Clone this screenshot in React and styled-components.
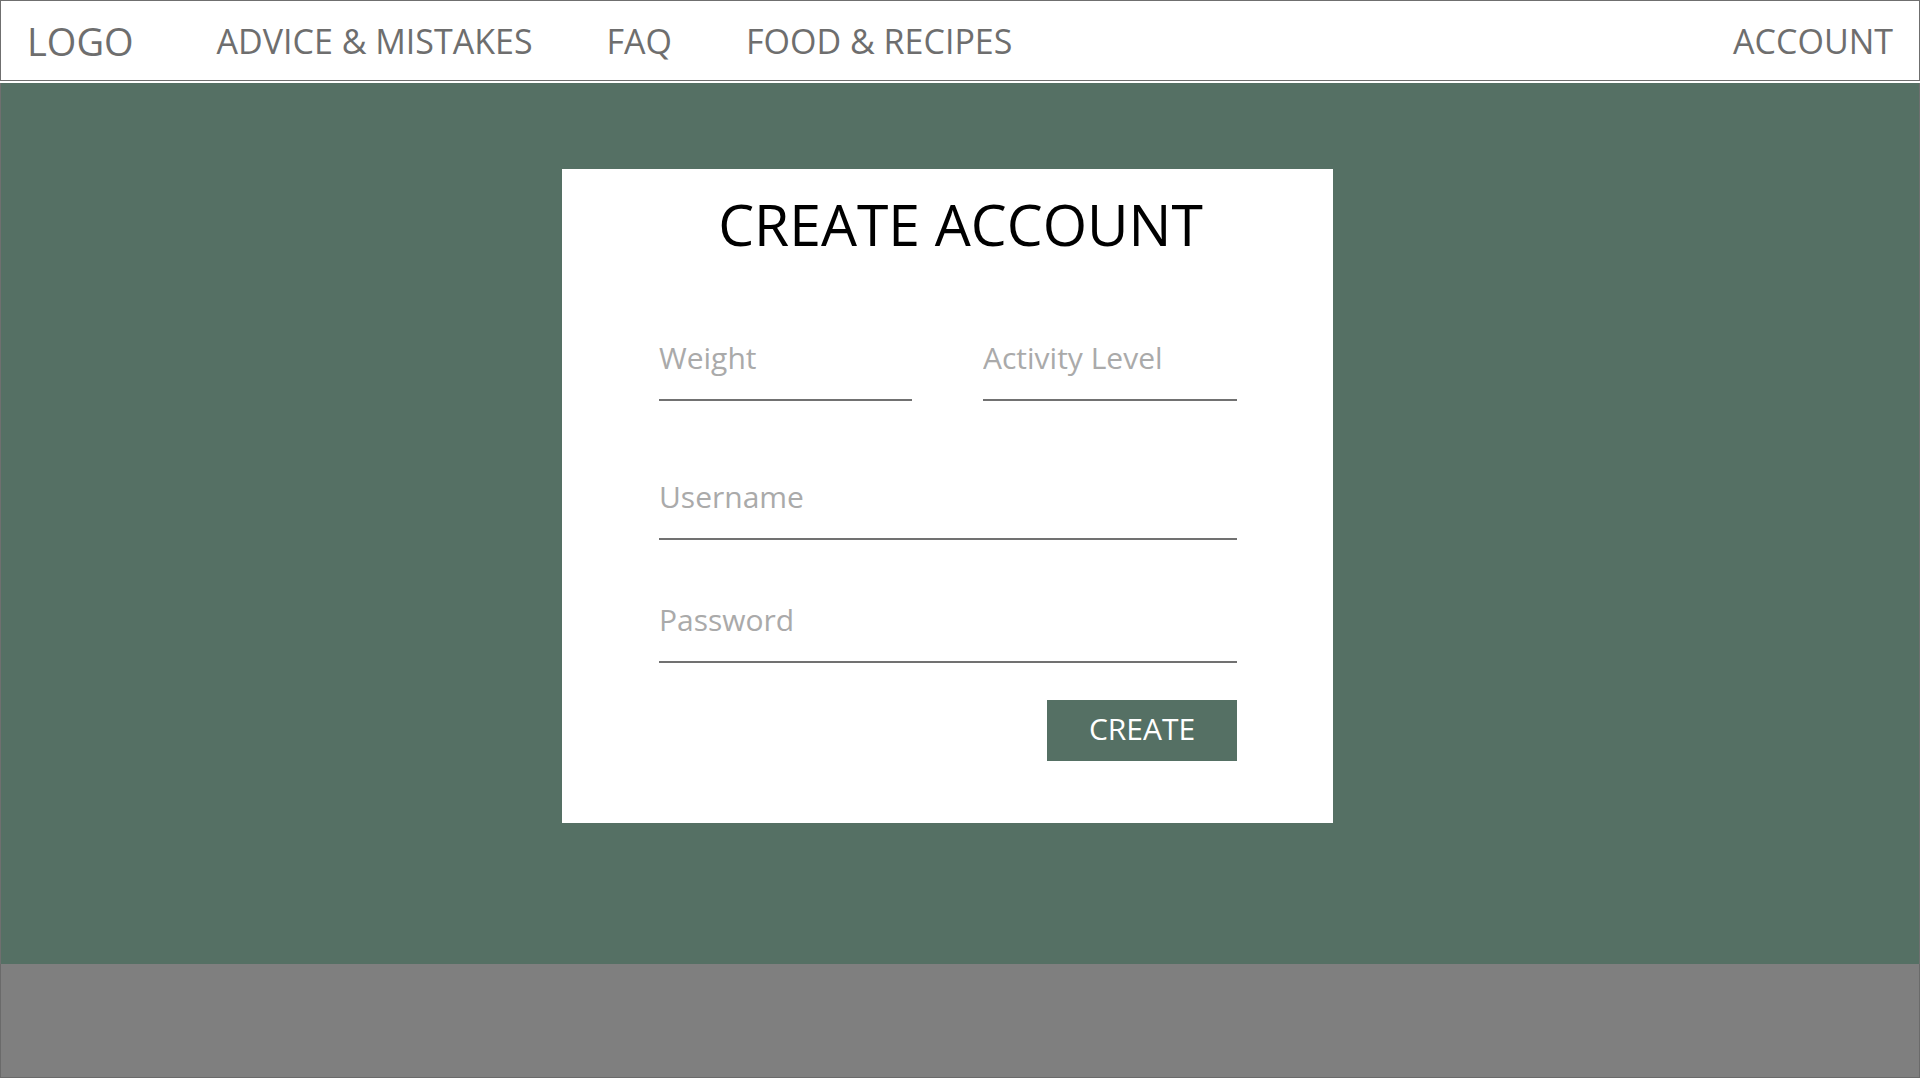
import React from 'react';
import styled, { createGlobalStyle } from 'styled-components';

const GlobalStyle = createGlobalStyle`
  html, body {
    margin: 0;
    padding: 0;
    background: #ffffff;
    font-family: "Open Sans", "Noto Sans", sans-serif;
  }
  * {
    box-sizing: border-box;
  }
`;

const links = ['ADVICE & MISTAKES', 'FAQ', 'FOOD & RECIPES'];

export default function App() {
  return (
    <>
      <GlobalStyle />
      <Page>
        <Nav>
          <Logo>LOGO</Logo>
          <Links>
            {links.map(l => <NavLink key={l}>{l}</NavLink>)}
          </Links>
          <NavLink>ACCOUNT</NavLink>
        </Nav>
        <Main>
          <Card>
            <Title>CREATE ACCOUNT</Title>
            <Row $gap={79}>
              <Input placeholder='Weight' />
              <Input placeholder='Activity Level' />
            </Row>
            <Input placeholder='Username' $gap={75} />
            <Input placeholder='Password' $gap={59} />
            <Actions>
              <Button>CREATE</Button>
            </Actions>
          </Card>
        </Main>
        <Footer />
      </Page>
    </>
  );
}

const Page = styled.div`
  width: 100%;
  min-height: 1078px;
  display: flex;
  flex-direction: column;
`;

const Nav = styled.nav`
  height: 81px;
  display: flex;
  align-items: center;
  padding: 0 26px 0 26px;
  border: 1px solid #6f6f6f;
  margin-bottom: 2px;
  background: #ffffff;
`;

const Logo = styled.div`
  font-size: 38px;
  color: #6e6e6e;
  margin-right: 83px;
  line-height: 1;
`;

const Links = styled.div`
  display: flex;
  gap: 74px;
  flex: 1;
`;

const NavLink = styled.a`
  font-size: 34px;
  color: #6e6e6e;
  line-height: 1;
  cursor: pointer;
`;

const Main = styled.main`
  height: 881px;
  background: #557064;
  border-left: 1px solid #6f6f6f;
  border-right: 1px solid #6f6f6f;
  display: flex;
  justify-content: center;
  align-items: flex-start;
  padding: 86px 25px 0 0;
`;

const Card = styled.div`
  width: 771px;
  height: 654px;
  background: #ffffff;
  padding: 21px 96px 0 97px;
  display: flex;
  flex-direction: column;
`;

const Title = styled.h1`
  margin: 0;
  padding-left: 25px;
  text-align: center;
  font-size: 57px;
  font-weight: 400;
  line-height: 68px;
  color: #000000;
`;

const Row = styled.div`
  display: grid;
  grid-template-columns: 253px 254px;
  justify-content: space-between;
  margin-top: ${props => props.$gap}px;
`;

const Input = styled.input`
  display: block;
  width: 100%;
  height: 64px;
  margin: ${props => props.$gap ? `${props.$gap}px 0 0` : '0'};
  padding: 0 0 22px;
  border: none;
  border-bottom: 2px solid #717171;
  outline: none;
  font-family: "Open Sans", "Noto Sans", sans-serif;
  font-size: 30px;
  color: #333333;
  background: transparent;
  &::placeholder {
    color: #aaaaaa;
  }
`;

const Actions = styled.div`
  display: flex;
  justify-content: flex-end;
  margin-top: 37px;
`;

const Button = styled.button`
  width: 190px;
  height: 61px;
  padding: 0 0 4px;
  background: #557064;
  border: none;
  color: #ffffff;
  font-family: "Open Sans", "Noto Sans", sans-serif;
  font-size: 30px;
  cursor: pointer;
`;

const Footer = styled.footer`
  height: 114px;
  background: #7f7f7f;
  border: 1px solid #6a6a6a;
  border-top: none;
`;
